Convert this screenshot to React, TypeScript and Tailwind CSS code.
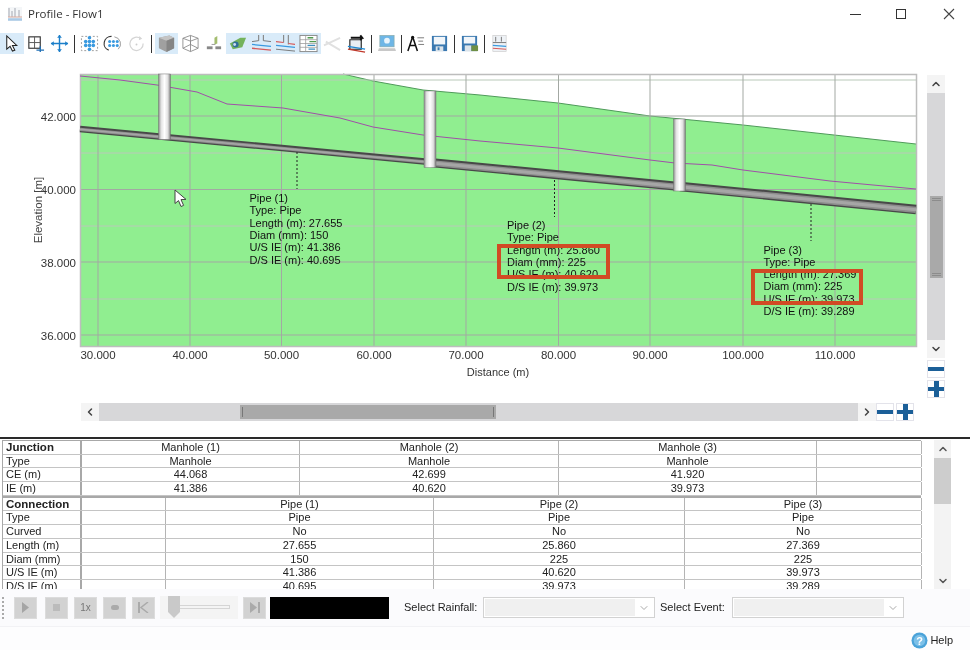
import { ChevronDown, ChevronLeft, ChevronRight, ChevronUp } from "lucide-react"
import type { ReactNode } from "react"

const FONT = "'Liberation Sans', Arial, sans-serif"

const xTicks = [
  { x: 98, label: "30.000" },
  { x: 190, label: "40.000" },
  { x: 281.5, label: "50.000" },
  { x: 374, label: "60.000" },
  { x: 466, label: "70.000" },
  { x: 558.5, label: "80.000" },
  { x: 650, label: "90.000" },
  { x: 743, label: "100.000" },
  { x: 835, label: "110.000" },
]

const yTicks = [
  { y: 116, label: "42.000" },
  { y: 189.5, label: "40.000" },
  { y: 262, label: "38.000" },
  { y: 335, label: "36.000" },
]

const minorY = [80, 153, 226, 299]

const groundPts = "80,74 343,74 373,81 423,90 480,95 558,103 650,116 743,125 916,144 916,346 80,346"
const purplePts =
  "80,76 120,80 157,85 197,92 227,104 283,108 340,118 373,127 423,135 480,141 558,148 650,160 675,163 712,165 743,170 830,181 916,189"

// x1, y1, x2, y2 of the centre line, then thickness
const pipes = [
  { x1: 80, y1: 129, x2: 430, y2: 162, w: 6.5 },
  { x1: 430, y1: 162.5, x2: 680, y2: 186.5, w: 9 },
  { x1: 680, y1: 186.5, x2: 916, y2: 209.5, w: 9.5 },
]

const manholes = [
  { x: 158.5, y: 74, h: 65.5 },
  { x: 424, y: 91, h: 76.5 },
  { x: 673.5, y: 119, h: 72 },
]

const labels = [
  { x: 249.5, y: 198, lines: ["Pipe (1)", "Type: Pipe", "Length (m): 27.655", "Diam (mm): 150", "U/S IE (m): 41.386", "D/S IE (m): 40.695"] },
  { x: 507, y: 225, lines: ["Pipe (2)", "Type: Pipe", "Length (m): 25.860", "Diam (mm): 225", "U/S IE (m): 40.620", "D/S IE (m): 39.973"] },
  { x: 763.5, y: 249.5, lines: ["Pipe (3)", "Type: Pipe", "Length (m): 27.369", "Diam (mm): 225", "U/S IE (m): 39.973", "D/S IE (m): 39.289"] },
]

function ProfileChart() {
  return (
    <svg width={925} height={342} viewBox="0 56 925 342" className="shrink-0" style={{ fontFamily: FONT }}>
      <defs>
        <linearGradient id="mh" x1="0" x2="1" y1="0" y2="0">
          <stop offset="0" stopColor="#8a8a8a" />
          <stop offset="0.22" stopColor="#e2e2e2" />
          <stop offset="0.5" stopColor="#fff" />
          <stop offset="0.78" stopColor="#e0e0e0" />
          <stop offset="1" stopColor="#7c7c7c" />
        </linearGradient>
      </defs>
      <rect x={80.5} y={74.5} width={836} height={272} fill="#fff" />
      <polygon points={groundPts} fill="#90ee90" />
      <polyline points="343,74 373,81 423,90 480,95 558,103 650,116 743,125 916,144" fill="none" stroke="#4f9a5a" strokeWidth={1} />
      {minorY.map((y) => (
        <line key={y} x1={80} x2={916} y1={y} y2={y} stroke="#b9c9b9" strokeWidth={1} />
      ))}
      {yTicks.map((t) => (
        <line key={t.y} x1={80} x2={916} y1={t.y} y2={t.y} stroke="#a3a8a3" strokeWidth={1} />
      ))}
      {xTicks.map((t) => (
        <line key={t.x} x1={t.x} x2={t.x} y1={74} y2={346} stroke="#a3a8a3" strokeWidth={1} />
      ))}
      <rect x={80.5} y={74.5} width={836} height={272} fill="none" stroke="#bdbdbd" strokeWidth={1.5} />
      <polyline points={purplePts} fill="none" stroke="#a04fa8" strokeWidth={1} />

      {pipes.map((p) => (
        <g key={p.x1}>
          <line x1={p.x1} y1={p.y1} x2={p.x2} y2={p.y2} stroke="#484848" strokeWidth={p.w} />
          <line x1={p.x1} y1={p.y1 + 0.3} x2={p.x2} y2={p.y2 + 0.3} stroke="#8c8c8c" strokeWidth={p.w - 3.2} />
          <line x1={p.x1} y1={p.y1 + 0.3} x2={p.x2} y2={p.y2 + 0.3} stroke="#a6a6a6" strokeWidth={(p.w - 3.2) / 2} />
        </g>
      ))}
      {manholes.map((m) => (
        <rect key={m.x} x={m.x} y={m.y} width={12} height={m.h} fill="url(#mh)" stroke="#6b6b6b" strokeWidth={0.4} />
      ))}

      <line x1={297} x2={297} y1={152} y2={189} stroke="#222" strokeDasharray="2 2" />
      <line x1={554.5} x2={554.5} y1={180} y2={217} stroke="#222" strokeDasharray="2 2" />
      <line x1={811} x2={811} y1={204} y2={241} stroke="#222" strokeDasharray="2 2" />

      {labels.map((l) =>
        l.lines.map((line, i) => (
          <text key={line + l.x} x={l.x} y={l.y + i * 12.3 + 4} fontSize={11} fill="#111">
            {line}
          </text>
        )),
      )}

      <rect x={499} y={246} width={109} height={31} fill="none" stroke="#d14b24" strokeWidth={4} />
      <rect x={753} y={271} width={108} height={32} fill="none" stroke="#d14b24" strokeWidth={4} />

      {yTicks.map((t) => (
        <text key={t.y} x={76} y={t.y + 4.5} fontSize={11.5} textAnchor="end" fill="#333">
          {t.label}
        </text>
      ))}
      {xTicks.map((t) => (
        <text key={t.x} x={t.x} y={359} fontSize={11.5} textAnchor="middle" fill="#333">
          {t.label}
        </text>
      ))}
      <text x={42} y={210} fontSize={11.5} textAnchor="middle" fill="#444" transform="rotate(-90 42 210)">
        Elevation [m]
      </text>
      <text x={498} y={376} fontSize={11} textAnchor="middle" fill="#333">
        Distance (m)
      </text>

      <path d="M175 190 L175 203.5 L178.5 200.6 L181 206.5 L183.6 205.4 L181 199.6 L186 199.4 Z" fill="#fff" stroke="#444" strokeWidth={1} />
    </svg>
  )
}

function ToolBtn({ children, on }: { children: ReactNode; on?: boolean }) {
  return (
    <div className={`w-[23.75px] h-[21px] flex items-center justify-center ${on ? "bg-[#d9ebf9]" : ""}`}>
      <svg width={19} height={19} viewBox="0 0 20 20" fill="none">
        {children}
      </svg>
    </div>
  )
}

function Sep() {
  return <div className="w-[6px] h-[18px] flex justify-center"><div className="w-px h-full bg-[#333]" /></div>
}

const dots = [[10, 4], [6, 8], [10, 8], [14, 8], [6, 12], [10, 12], [14, 12], [10, 16]]

function Toolbar() {
  return (
    <div className="flex items-center h-[26px] shrink-0 pt-px">
      <ToolBtn on>
        <path d="M5 2 L5 16 L8.5 13 L11 18 L13.5 17 L11 12 L15.5 12 Z" fill="#fff" stroke="#222" strokeWidth={1.1} />
      </ToolBtn>
      <ToolBtn>
        <rect x="3" y="3" width="12" height="12" fill="#fff" stroke="#333" strokeWidth={1.2} />
        <path d="M9 3 V15 M3 9 H15" stroke="#555" />
        <path d="M11 17 H19 M15 13 V19" stroke="#1f6fb5" strokeWidth={1.4} />
      </ToolBtn>
      <ToolBtn>
        <path d="M1 10 H19 M10 1 V19" stroke="#1c7fc9" strokeWidth={1.5} />
        <path d="M10 1 L7.5 4 H12.5 Z M10 19 L7.5 16 H12.5 Z M1 10 L4 7.5 V12.5 Z M19 10 L16 7.5 V12.5 Z" fill="#1c7fc9" />
      </ToolBtn>
      <Sep />
      <ToolBtn>
        <rect x="1.5" y="2.5" width="17" height="15" stroke="#999" strokeDasharray="2 2" />
        {dots.map(([x, y]) => (
          <circle key={`${x}-${y}`} cx={x} cy={y} r="1.9" fill="#3a9ae0" />
        ))}
      </ToolBtn>
      <ToolBtn>
        <path d="M6 17 A7.5 7.5 0 0 1 9 2.5" stroke="#333" strokeWidth={1.2} />
        <path d="M12 3 A7.5 7.5 0 0 1 16 16" stroke="#999" strokeWidth={1} />
        {dots.slice(1, 7).map(([x, y]) => (
          <circle key={`${x}-${y}`} cx={x + 1} cy={y} r="1.6" fill="#3a9ae0" />
        ))}
      </ToolBtn>
      <ToolBtn>
        <path d="M14.5 5 A7 7 0 1 0 17 10" stroke="#d5d5d5" strokeWidth={1.3} />
        <path d="M13 2 L16 5 L12.5 6.5 Z" fill="#d5d5d5" />
        <circle cx="10" cy="11" r="1" fill="#ccc" />
      </ToolBtn>
      <Sep />
      <ToolBtn on>
        <path d="M2 4 L13 1.5 L18 4 L18 15 L10 19 L2 15 Z" fill="#a0a0a0" />
        <path d="M2 4 L13 1.5 L18 4 L10 7 Z" fill="#c4c4c4" />
        <path d="M10 7 L18 4 L18 15 L10 19 Z" fill="#858585" />
      </ToolBtn>
      <ToolBtn>
        <path d="M2 4.5 L10 1.5 L18 4.5 L18 15 L10 18.5 L2 15 Z M2 4.5 L10 7.5 L18 4.5 M10 7.5 V18.5 M2 15 L10 11 L18 15 M10 1.5 V11" stroke="#888" strokeWidth={0.9} />
      </ToolBtn>
      <ToolBtn>
        <path d="M11 11 V4 L14 2 L14 10 Z" fill="#a3bd6f" />
        <rect x="3" y="13" width="6" height="3" fill="#888" />
        <rect x="12" y="13" width="6" height="3" fill="#888" />
        <path d="M8 11 H12" stroke="#999" />
      </ToolBtn>
      <ToolBtn on>
        <path d="M2 10 L13 4 L19 4 L15 14 L5 16 Z" fill="#74b35c" />
        <circle cx="8" cy="11" r="3.2" fill="#2f6f9a" />
        <circle cx="7" cy="11" r="1.5" fill="#cde" />
      </ToolBtn>
      <ToolBtn on>
        <path d="M7 1 V7 M12 1 V7" stroke="#888" strokeWidth={1.2} />
        <path d="M0 8 L7 7 M12 7 L20 8" stroke="#777" />
        <path d="M0 11 L20 13" stroke="#3a9ae0" strokeWidth={1.4} />
        <path d="M0 15 L20 17" stroke="#d65a5a" strokeWidth={1.4} />
      </ToolBtn>
      <ToolBtn on>
        <path d="M8 1 V9 M13 1 V11" stroke="#888" strokeWidth={1.2} />
        <path d="M0 8 L8 9 M13 10 L20 11" stroke="#d65a5a" strokeWidth={1.2} />
        <path d="M0 12 L20 14" stroke="#3a9ae0" strokeWidth={1.4} />
        <path d="M0 16 L20 18" stroke="#777" />
      </ToolBtn>
      <ToolBtn on>
        <rect x="1" y="1.5" width="18" height="17" fill="#fff" stroke="#888" />
        <path d="M1 6 H19 M1 10 H19 M1 14 H19 M7 1.5 V18.5" stroke="#999" strokeWidth={0.8} />
        <path d="M9 4 H15 M11 8 H18" stroke="#4f9a4f" strokeWidth={1.5} />
        <path d="M9 12 H17 M10 16 H17" stroke="#3a8fc0" strokeWidth={1.3} />
      </ToolBtn>
      <ToolBtn>
        <path d="M1 12 L18 4 M3 8 L18 17" stroke="#e0e0e0" strokeWidth={2} />
      </ToolBtn>
      <ToolBtn>
        <path d="M3 6 H15 V16 H3 Z" fill="#e8eef4" stroke="#222" strokeWidth={1.2} />
        <path d="M1 16 L19 19" stroke="#c0392b" strokeWidth={1.4} />
        <path d="M1 13 L19 16" stroke="#1c86d1" strokeWidth={1.4} />
        <path d="M4 4 H16 L14 1.5 M16 4 L14 6.5" stroke="#111" strokeWidth={2} />
      </ToolBtn>
      <Sep />
      <ToolBtn>
        <rect x="3" y="1.5" width="15" height="12" fill="#6eb6e6" stroke="#8aa" strokeWidth={0.7} />
        <circle cx="10.5" cy="7" r="3" fill="#e8f4fc" />
        <path d="M2 15 H19 L20 18 H1 Z" fill="#c8c8c8" />
      </ToolBtn>
      <Sep />
      <ToolBtn>
        <path d="M7 3 L2 18 M7 3 L12 18 M4 12 H10" stroke="#111" strokeWidth={1.6} />
        <circle cx="7" cy="3.5" r="1.6" fill="#111" />
        <path d="M12 4 H19 M13 7.5 H18 M13 11 H19" stroke="#777" />
      </ToolBtn>
      <ToolBtn>
        <rect x="2" y="2" width="16" height="16" fill="#3a78b0" />
        <rect x="4" y="3" width="12" height="8" fill="#f1f5f9" />
        <rect x="6" y="13" width="8" height="5" fill="#dce4ea" />
        <rect x="8" y="14" width="2" height="3" fill="#3a78b0" />
      </ToolBtn>
      <Sep />
      <ToolBtn>
        <rect x="2" y="2" width="16" height="16" fill="#3a78b0" />
        <rect x="4" y="3" width="12" height="7" fill="#f1f5f9" />
        <rect x="5" y="12" width="7" height="6" fill="#dce4ea" />
        <rect x="12" y="12" width="7" height="6" fill="#6f8f45" />
      </ToolBtn>
      <Sep />
      <ToolBtn>
        <rect x="3" y="1.5" width="14" height="17" fill="#eef2f6" stroke="#ccc" strokeWidth={0.7} />
        <path d="M6 3 V8 M12 3 V8" stroke="#777" />
        <path d="M3 9 H17" stroke="#777" />
        <path d="M3 12 L17 13" stroke="#3a9ae0" strokeWidth={1.3} />
        <path d="M3 15 L17 16" stroke="#d65a5a" strokeWidth={1.2} />
      </ToolBtn>
    </div>
  )
}

function ZoomBtn({ plus }: { plus?: boolean }) {
  return (
    <div className="w-[18px] h-[18px] border border-[#e3e3ea] bg-white relative shrink-0">
      <div className="absolute left-0 right-0 top-[6px] h-[4px] bg-[#1b5f98]" />
      {plus && <div className="absolute left-[5.5px] top-0 bottom-0 w-[5px] bg-[#1b5f98]" />}
    </div>
  )
}

function Row({ cols, cells, head }: { cols: string; cells: string[]; head?: boolean }) {
  return (
    <div className={`grid ${cols} h-[13.7px] border-b border-[#c4c4c4]`}>
      {cells.map((c, i) => (
        <div
          key={i}
          className={
            i === 0
              ? `pl-[3px] leading-[12px] whitespace-nowrap border-r-2 border-[#a8a8a8] ${head ? "font-bold text-[11.5px]" : ""}`
              : "text-center leading-[12px] whitespace-nowrap border-r border-[#b4b4b4]"
          }
        >
          {c}
        </div>
      ))}
    </div>
  )
}

const junctionCols = "grid-cols-[79px_218px_259px_258px_105px]"
const connectionCols = "grid-cols-[79px_84px_268px_251px_237px]"

function Ctl({ children }: { children?: ReactNode }) {
  return (
    <div className="w-[23px] h-[22px] bg-[#d2d2d2] border border-[#dcdcdc] flex items-center justify-center shrink-0 text-[10px] text-[#777]">
      {children}
    </div>
  )
}

function Combo() {
  return (
    <div className="h-[21px] w-[172px] border border-[#d2d2d2] bg-white flex p-px shrink-0">
      <div className="flex-1 bg-[#f0f0f0]" />
      <div className="w-[18px] flex items-center justify-center">
        <ChevronDown className="w-3 h-3 text-[#aaa]" />
      </div>
    </div>
  )
}

export default function App() {
  return (
    <div className="w-[970px] h-[650px] overflow-hidden bg-white flex flex-col text-[11px] text-[#222] blur-[0.3px]" style={{ fontFamily: FONT }}>
      {/* Title bar */}
      <div className="flex items-center h-[30px] shrink-0 pb-[2px]">
        <svg width={16} height={16} viewBox="0 0 16 16" className="ml-[7px]">
          <rect x="1" y="1" width="14" height="14" fill="#f4f6f8" />
          <path d="M2 2 V11 M5 5 V11 M8 2 V11 M12 4 V11" stroke="#a4a8b2" strokeWidth={1} />
          <path d="M1 11 H15" stroke="#d8a99c" strokeWidth={1} />
          <path d="M1 13.5 H15" stroke="#a9c9e6" strokeWidth={2.5} />
        </svg>
        <span className="ml-[5px] text-[11.5px] text-[#333]" style={{ fontFamily: "'Open Sans', sans-serif" }}>Profile - Flow1</span>
        <div className="ml-auto flex items-center pr-[15px]">
          <div className="w-[11px] h-px bg-[#333]" />
          <div className="ml-[35px] w-[10px] h-[10px] border border-[#333]" />
          <svg width={12} height={12} viewBox="0 0 12 12" className="ml-[37px]">
            <path d="M1 1 L11 11 M11 1 L1 11" stroke="#444" strokeWidth={1.1} />
          </svg>
        </div>
      </div>

      <Toolbar />

      {/* Profile chart and its scrollbars */}
      <div className="flex h-[342px] shrink-0">
        <ProfileChart />
        <div className="ml-[2px] mt-[19px] w-[18px] flex flex-col">
          <div className="h-[18px] bg-[#f4f4f4] flex items-center justify-center">
            <ChevronUp className="w-3 h-3 text-[#444]" strokeWidth={3} />
          </div>
          <div className="h-[247px] bg-[#d7d7d9] pt-[103px] px-[2.5px]">
            <div className="h-[82px] bg-[#a9a9a9] flex flex-col justify-between py-[2px] px-[2px]">
              <div className="h-[3px] border-y border-[#8c8c8c]" />
              <div className="h-[3px] border-y border-[#8c8c8c]" />
            </div>
          </div>
          <div className="h-[18px] bg-[#f4f4f4] flex items-center justify-center">
            <ChevronDown className="w-3 h-3 text-[#444]" strokeWidth={3} />
          </div>
          <div className="mt-[2px] flex flex-col gap-[2px]">
            <ZoomBtn />
            <ZoomBtn plus />
          </div>
        </div>
      </div>

      <div className="flex mt-[5px] ml-[81px] h-[18px] shrink-0">
        <div className="w-[18px] bg-[#f4f4f4] flex items-center justify-center">
          <ChevronLeft className="w-3 h-3 text-[#444]" strokeWidth={3} />
        </div>
        <div className="w-[759px] bg-[#d7d7d9] pl-[141px] py-[2px]">
          <div className="w-[256px] h-full bg-[#a9a9a9] flex justify-between py-[2px] px-[2px]">
            <div className="w-[2px] border-l border-[#777]" />
            <div className="w-[2px] border-r border-[#777]" />
          </div>
        </div>
        <div className="w-[18px] bg-[#f4f4f4] flex items-center justify-center">
          <ChevronRight className="w-3 h-3 text-[#444]" strokeWidth={3} />
        </div>
        <ZoomBtn />
        <div className="w-[2px]" />
        <ZoomBtn plus />
      </div>

      <div className="mt-[16px] h-[1.5px] bg-[#2a2a2a] shrink-0" />

      {/* Results table */}
      <div className="flex h-[149px] mt-[1.5px] shrink-0 overflow-hidden">
        <div className="ml-[2px] w-[919px] shrink-0">
          <div className="border-t border-l border-[#a8a8a8]">
            <Row cols={junctionCols} head cells={["Junction", "Manhole (1)", "Manhole (2)", "Manhole (3)", ""]} />
            <Row cols={junctionCols} cells={["Type", "Manhole", "Manhole", "Manhole", ""]} />
            <Row cols={junctionCols} cells={["CE (m)", "44.068", "42.699", "41.920", ""]} />
            <Row cols={junctionCols} cells={["IE (m)", "41.386", "40.620", "39.973", ""]} />
          </div>
          <div className="border-t-2 border-l border-[#a8a8a8]">
            <Row cols={connectionCols} head cells={["Connection", "", "Pipe (1)", "Pipe (2)", "Pipe (3)"]} />
            <Row cols={connectionCols} cells={["Type", "", "Pipe", "Pipe", "Pipe"]} />
            <Row cols={connectionCols} cells={["Curved", "", "No", "No", "No"]} />
            <Row cols={connectionCols} cells={["Length (m)", "", "27.655", "25.860", "27.369"]} />
            <Row cols={connectionCols} cells={["Diam (mm)", "", "150", "225", "225"]} />
            <Row cols={connectionCols} cells={["U/S IE (m)", "", "41.386", "40.620", "39.973"]} />
            <Row cols={connectionCols} cells={["D/S IE (m)", "", "40.695", "39.973", "39.289"]} />
          </div>
        </div>
        <div className="ml-[13px] w-[17px] flex flex-col bg-[#f3f3f3]">
          <div className="h-[18px] flex items-center justify-center">
            <ChevronUp className="w-3 h-3 text-[#555]" strokeWidth={3} />
          </div>
          <div className="h-[46px] bg-[#cdcdcd]" />
          <div className="flex-1" />
          <div className="h-[17px] flex items-center justify-center">
            <ChevronDown className="w-3 h-3 text-[#555]" strokeWidth={3} />
          </div>
        </div>
      </div>

      {/* Playback controls */}
      <div className="flex items-center h-[38px] shrink-0 bg-[#fbfbfd] border-b border-[#f2f2f5]">
        <div className="ml-[2px] h-[22px] border-l-2 border-dotted border-[#aaa]" />
        <div className="ml-[10px]">
          <Ctl>
            <svg width={9} height={11} viewBox="0 0 9 11"><path d="M1 0 L8 5.5 L1 11 Z" fill="#a5a5a5" /></svg>
          </Ctl>
        </div>
        <div className="ml-[8px]">
          <Ctl><div className="w-[7px] h-[7px] bg-[#bbb]" /></Ctl>
        </div>
        <div className="ml-[6px]">
          <Ctl>1x</Ctl>
        </div>
        <div className="ml-[6px]">
          <Ctl><div className="w-[8px] h-[5px] rounded-full bg-[#aaa]" /></Ctl>
        </div>
        <div className="ml-[6px]">
          <Ctl>
            <svg width={11} height={11} viewBox="0 0 11 11"><path d="M1 0 V11" stroke="#aaa" strokeWidth={2} /><path d="M10 0 L3 5.5 L10 11" fill="none" stroke="#aaa" strokeWidth={1.5} /></svg>
          </Ctl>
        </div>
        <div className="ml-[5px] w-[78px] h-[23px] bg-[#f4f4f4] relative shrink-0">
          <div className="absolute left-[8px] right-[8px] top-[9px] h-[4px] border border-[#d5d5d5]" />
          <svg width={12} height={22} viewBox="0 0 12 22" className="absolute left-[8px] top-0">
            <path d="M0 0 H12 V16 L6 22 L0 16 Z" fill="#c9c9c9" />
          </svg>
        </div>
        <div className="ml-[5px]">
          <Ctl>
            <svg width={11} height={11} viewBox="0 0 11 11"><path d="M10 0 V11" stroke="#aaa" strokeWidth={2} /><path d="M1 0 L8 5.5 L1 11 Z" fill="#aaa" /></svg>
          </Ctl>
        </div>
        <div className="ml-[4px] w-[119px] h-[22px] bg-black shrink-0" />
        <span className="ml-[15px] w-[79px] shrink-0">Select Rainfall:</span>
        <Combo />
        <span className="ml-[5px] w-[72px] shrink-0">Select Event:</span>
        <Combo />
      </div>

      {/* Help */}
      <div className="flex-1 flex items-center justify-end pr-[17px] pt-[3px] bg-[#fdfdfe]">
        <svg width={17} height={17} viewBox="0 0 17 17">
          <circle cx="8.5" cy="8.5" r="8" fill="#4ba3d9" />
          <circle cx="8.5" cy="8.5" r="5.8" fill="#7cc0e8" />
          <text x="8.5" y="12.5" fontSize="11" fontWeight="bold" textAnchor="middle" fill="#fff">?</text>
        </svg>
        <span className="ml-[2px]">Help</span>
      </div>
    </div>
  )
}
